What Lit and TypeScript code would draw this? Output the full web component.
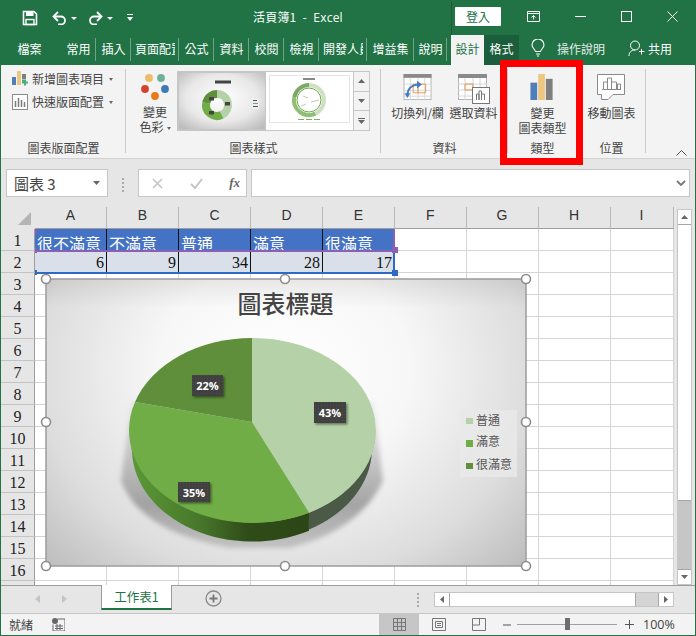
import { LitElement, html, css, svg } from 'lit';
import { customElement } from 'lit/decorators.js';

const RIBBON_TABS = [
  { label: '常用', w: 35 },
  { label: '插入', w: 35 },
  { label: '頁面配置', w: 48 },
  { label: '公式', w: 35 },
  { label: '資料', w: 35 },
  { label: '校閱', w: 35 },
  { label: '檢視', w: 35 },
  { label: '開發人員', w: 48 },
  { label: '增益集', w: 47 },
  { label: '說明', w: 33 },
];
const COLS = [
  { name: 'A', w: 72 },
  { name: 'B', w: 72 },
  { name: 'C', w: 72 },
  { name: 'D', w: 72 },
  { name: 'E', w: 72 },
  { name: 'F', w: 71.5 },
  { name: 'G', w: 72 },
  { name: 'H', w: 72 },
  { name: 'I', w: 63 },
];
const HEAD = ['很不滿意', '不滿意', '普通', '滿意', '很滿意'];
const VALUES = ['6', '9', '34', '28', '17'];
const ROW_NUMS = Array.from({ length: 16 }, (_, i) => i + 1);

@customElement('app-root')
export class AppRoot extends LitElement {
  static styles = css`
    :host { display: block; width: 696px; height: 636px; overflow: hidden; }
    .win {
      position: relative;
      width: 696px;
      height: 636px;
      box-sizing: border-box;
      border: solid #217346;
      border-width: 0 1px 1px 1px;
      background: #e6e6e6;
      display: flex;
      flex-direction: column;
      font-family: "Noto Sans CJK TC", "Open Sans", sans-serif;
      font-size: 12px;
      color: #444;
    }
    svg { display: block; flex: none; }

    /* title bar */
    .title {
      height: 35px;
      margin: 0 -1px;
      background: #217346;
      color: #fff;
      display: flex;
      align-items: flex-start;
      flex: none;
    }
    .qat { display: flex; align-items: center; height: 35px; padding-left: 22px; width: 231px; box-sizing: border-box; }
    .caret { width: 0; height: 0; border: 3px solid transparent; border-top: 3px solid #fff; border-bottom: 0; margin: 1px 0 0 0; }
    .doc { width: 220px; height: 34px; line-height: 34px; font-size: 12px; padding-left: 22px; box-sizing: border-box; letter-spacing: .2px; white-space: nowrap; }
    .doc span { font-family: "Open Sans", sans-serif; }
    .title-sep { width: 1px; height: 33px; margin-top: 2px; background: #1a5c38; }
    .login {
      width: 46px;
      height: 19px;
      margin: 7px 0 0 3px;
      background: #fff;
      color: #217346;
      text-align: center;
      line-height: 19px;
      border-radius: 1px;
      font-size: 12px;
    }
    .caption { display: flex; align-items: center; height: 33px; padding-left: 26px; gap: 35px; }

    /* tabs */
    .tabs {
      height: 30px;
      margin: 0 -1px;
      background: #217346;
      color: #fff;
      display: flex;
      flex: none;
      align-items: stretch;
      font-size: 12px;
    }
    .tab { display: flex; align-items: center; justify-content: center; overflow: hidden; white-space: nowrap; box-sizing: border-box; position: relative; padding-bottom: 4px; }
    .tab.sep::after { content: ''; position: absolute; right: 0; top: 3px; bottom: 4px; width: 1px; background: #6fa287; }
    .tab .clip { display: block; overflow: hidden; max-width: 40px; }
    .tab.file { width: 61px; padding-right: 2px; }
    .tab.active { width: 33px; margin-left: 4px; background: #f3f3f3; color: #217346; }
    .tab.fmt { width: 35px; background: #1c5e3b; }
    .help { display: flex; align-items: center; margin-left: 12px; gap: 12px; color: #e3ede8; width: 97px; padding-bottom: 4px; box-sizing: border-box; }
    .help b { font-weight: 400; display: block; width: 48px; overflow: hidden; white-space: nowrap; }
    .share { display: flex; align-items: center; gap: 3px; padding-bottom: 4px; }

    /* ribbon */
    .ribbon {
      height: 94px;
      flex: none;
      background: #f3f3f3;
      border-bottom: 1px solid #d2d2d2;
      box-sizing: border-box;
      display: flex;
      position: relative;
    }
    .group { position: relative; display: flex; flex-direction: column; align-items: stretch; box-sizing: border-box; }
    .group::after { content: ''; position: absolute; right: 0; top: 4px; bottom: 5px; width: 1px; background: #c9c9c9; }
    .g-body { flex: 1; display: flex; min-height: 0; }
    .g-label { height: 19px; line-height: 18px; text-align: center; font-size: 12px; color: #444; flex: none; }
    .stack { display: flex; flex-direction: column; padding: 4px 0 0 11px; gap: 4px; }
    .stack-row { display: flex; align-items: center; height: 19px; gap: 4px; white-space: nowrap; }
    .caret-d { width: 0; height: 0; border: 2.5px solid transparent; border-top: 3px solid #666; border-bottom: 0; margin: 1px 0 0 2px; }
    .big { display: flex; flex-direction: column; align-items: center; text-align: center; line-height: 15px; white-space: nowrap; box-sizing: border-box; }
    .big .ic { height: 40px; box-sizing: border-box; padding-top: 9px; display: flex; align-items: flex-start; justify-content: center; }
    .big.color { width: 51px; padding-left: 7px; }
    .swatches { margin: 8px 0 1px; }
    .gallery { display: flex; margin: 6px 0 0 0; height: 60px; border: 1px solid #c6c6c6; box-sizing: border-box; width: 193px; background: #fff; }
    .thumb { flex: none; }
    .thumb.sel { background: #c6c6c6; padding: 1px; }
    .thumb.plain { margin: 3px 0 0 3px; }
    .g-scroll { margin-left: auto; width: 15px; border-left: 1px solid #c6c6c6; display: flex; flex-direction: column; background: #f3f3f3; }
    .g-scroll div { flex: 1; display: flex; align-items: center; justify-content: center; border-bottom: 1px solid #c6c6c6; }
    .g-scroll div:last-child { border-bottom: 0; }
    .collapse { position: absolute; right: 8px; bottom: 2px; }

    /* formula bar */
    .fbar { height: 48px; flex: none; display: flex; align-items: flex-start; padding: 10px 5px 0 5px; box-sizing: border-box; }
    .fbox { height: 28px; box-sizing: border-box; border: 1px solid #c6c6c6; background: #fff; display: flex; align-items: center; }
    .name { width: 102px; padding: 0 7px; justify-content: space-between; font-size: 15px; color: #444; }
    .dots { width: 30px; display: flex; flex-direction: column; align-items: center; gap: 2px; padding-top: 9px; }
    .dots i { width: 2px; height: 2px; background: #a8a8a8; display: block; }
    .fx { width: 109px; padding: 0 6px 0 13px; justify-content: space-between; margin-right: 4px; }
    .fx em { font-family: "Liberation Serif", serif; font-size: 13px; font-weight: 700; color: #666; }
    .input { flex: 1; justify-content: flex-end; padding-right: 3px; }

    /* sheet */
    .sheet { flex: 1; min-height: 0; position: relative; display: flex; }
    .sheet-main { width: 673px; height: 378px; overflow: hidden; }
    .heads { display: flex; height: 22px; }
    .corner { width: 34px; flex: none; position: relative; }
    .tri { position: absolute; right: 4px; bottom: 4px; width: 0; height: 0; border-style: solid; border-width: 0 0 13px 13px; border-color: transparent transparent #b4b4b4 transparent; }
    .ch { box-sizing: border-box; flex: none; text-align: center; line-height: 17px; height: 22px; font-size: 14px; font-family: "Liberation Sans", sans-serif; color: #333; border-right: 1px solid #b8b8b8; border-bottom: 1px solid #9d9d9d; }
    .body { display: flex; position: relative; }
    .rows { width: 34px; flex: none; }
    .rh { box-sizing: border-box; height: 22px; line-height: 24px; text-align: center; font-size: 16px; font-family: "Liberation Serif", serif; color: #222; border-bottom: 1px solid #c4c4c4; border-right: 1px solid #9d9d9d; }
    .cells { background: #fff; flex: none; position: relative; border-right: 1px solid #9d9d9d; }
    .row { display: flex; height: 22px; }
    .c { box-sizing: border-box; flex: none; height: 22px; border-right: 1px solid #d4d4d4; border-bottom: 1px solid #d4d4d4; overflow: hidden; white-space: nowrap; font-size: 16px; color: #111; padding: 0 2px; }
    .c.h { background: #4472c4; color: #fff; border-right-color: #111; line-height: 28px; }
    .c.v { background: #dae0ea; border-right-color: #111; border-bottom-color: #fff; text-align: right; font-family: "Liberation Serif", serif; line-height: 24px; color: #111; }
    .vscroll { position: absolute; left: 676px; top: 2px; width: 15px; height: 376px; box-sizing: border-box; border: 1px solid #c6c6c6; background: #c6c6c6; display: flex; flex-direction: column; }
    .vs-btn { height: 14px; background: #fff; flex: none; display: flex; align-items: center; justify-content: center; border-bottom: 1px solid #a6a6a6; }
    .vs-thumb { height: 275px; background: #fff; flex: none; border-bottom: 1px solid #a6a6a6; }
    .vs-fill { flex: 1; }
    .vs-btn.end { border-top: 1px solid #a6a6a6; border-bottom: 0; }

    /* overlays on the grid */
    .range { position: absolute; left: 0; width: 360px; box-sizing: border-box; border: solid; border-width: 0 2px 2px 0; pointer-events: none; }
    .range.p { top: 0; height: 23px; border-color: #8a5fb5; }
    .range.b { top: 23px; height: 22px; border-color: #2e69c4; }
    .pin { position: absolute; width: 6px; height: 6px; }
    .pin.small { width: 2px; height: 5px; }
    .pin.purple { background: #8a5fb5; }
    .pin.blue { background: #2e69c4; }
    .chart { position: absolute; left: 44px; top: 278px; }

    /* sheet tabs */
    .stabs { height: 28px; flex: none; border-top: 1px solid #9d9d9d; box-sizing: border-box; display: flex; align-items: flex-start; position: relative; background: #e6e6e6; }
    .nav { width: 100px; height: 26px; display: flex; align-items: center; justify-content: center; gap: 22px; }
    .stab { width: 71px; height: 25px; margin-top: -1px; box-sizing: border-box; background: #fff; border: 1px solid #9d9d9d; border-top: 0; border-bottom: 2px solid #217346; color: #217346; text-align: center; line-height: 24px; font-size: 12.5px; }
    .plus { margin: 4px 0 0 33px; }
    .hs-dots { margin-left: 195px; width: 2px; padding-top: 7px; display: flex; flex-direction: column; gap: 2px; }
    .hs-dots i { width: 2px; height: 2px; background: #a8a8a8; display: block; }
    .hs { margin: 6px 0 0 15px; width: 240px; height: 15px; display: flex; border: 1px solid #c6c6c6; box-sizing: border-box; background: #d4d4d4; }
    .hs-btn { width: 14px; background: #fff; flex: none; display: flex; align-items: center; justify-content: center; border-right: 1px solid #a6a6a6; }
    .hs-btn.end { border-right: 0; border-left: 1px solid #a6a6a6; margin-left: auto; }
    .hs-thumb { width: 185px; background: #fff; border-right: 1px solid #a6a6a6; }

    /* status bar */
    .status { height: 22px; flex: none; background: #f3f3f3; border-top: 1px solid #c6c6c6; box-sizing: border-box; display: flex; align-items: center; padding-left: 8px; color: #444; }
    .status .ready { width: 43px; }
    .status .spacer { width: 314px; }
    .vbtn { width: 40px; height: 21px; display: flex; align-items: center; justify-content: center; }
    .vbtn.on { background: #c6c6c6; }
    .zoom { display: flex; align-items: center; margin-left: 4px; }
    .track { position: relative; width: 100px; height: 1px; background: #a0a0a0; margin: 0 8px 0 6px; }
    .knob { position: absolute; left: 48px; top: -6px; width: 5px; height: 12px; background: #6d6d6d; }
    .pct { margin-left: 9px; font-family: "Open Sans", sans-serif; font-size: 12.5px; color: #444; }

    .red { position: absolute; left: 499px; top: 60px; width: 83px; height: 105px; box-sizing: border-box; border: 7px solid #ff0000; pointer-events: none; }
  `;

  private saveIcon() {
    return html`<svg width="16" height="16" viewBox="0 0 16 16"><path d="M1.500 1.500h10.500L14.500 4V14.500H1.500z" fill="none" stroke="#fff" stroke-width="1.600"/><rect x="4" y="1.500" width="7.500" height="4.500" fill="#fff"/><rect x="4" y="9.500" width="8" height="5" fill="none" stroke="#fff" stroke-width="1.400"/></svg>`;
  }
  private undoIcon(flip = false) {
    return html`<svg width="15" height="14" viewBox="0 0 15 14" style=${flip ? 'transform:scaleX(-1)' : ''}><path d="M2.500 5.500h6.500a4 4 0 0 1 0 8H6" fill="none" stroke="#fff" stroke-width="1.800"/><path d="M6 1 1.500 5.500 6 10" fill="none" stroke="#fff" stroke-width="1.800"/></svg>`;
  }
  private donut(cx: number, cy: number, r: number, sw: number, cols: string[]) {
    const seg = (a: number, b: number, c: string) => {
      const p = (t: number) => [cx + r * Math.sin(t * 2 * Math.PI), cy - r * Math.cos(t * 2 * Math.PI)];
      const [x1, y1] = p(a);
      const [x2, y2] = p(b);
      return svg`<path d="M${x1} ${y1}A${r} ${r} 0 ${b - a > 0.5 ? 1 : 0} 1 ${x2} ${y2}" fill="none" stroke=${c} stroke-width=${sw}/>`;
    };
    return svg`${seg(0, 0.43, cols[0])}${seg(0.43, 0.78, cols[1])}${seg(0.78, 1, cols[2])}`;
  }

  private thumb1() {
    return html`<div class="thumb sel"><svg width="86" height="56" viewBox="0 0 86 56">
      <defs><radialGradient id="t1" cx=".5" cy=".45" r=".7"><stop offset="0" stop-color="#fff"/><stop offset=".6" stop-color="#e8e8e8"/><stop offset="1" stop-color="#bcbcbc"/></radialGradient></defs>
      <rect width="86" height="56" fill="url(#t1)"/>
      <rect x="36" y="7.500" width="16" height="3" fill="#444"/>
      ${this.donut(38, 32, 11, 8, ['#b5d1a7', '#70ad47', '#5f8f3a'])}
      <rect x="46" y="29" width="5" height="3.500" fill="#444"/><rect x="30" y="24" width="5" height="3.500" fill="#444"/><rect x="30" y="38" width="5" height="3.500" fill="#444"/>
      <rect x="73" y="25" width="7" height="11" fill="#eee"/><rect x="74" y="27" width="4" height="1" fill="#555"/><rect x="74" y="30" width="5" height="1" fill="#6a8"/><rect x="74" y="33" width="5" height="1" fill="#555"/>
    </svg></div>`;
  }
  private thumb2() {
    return html`<div class="thumb plain"><svg width="81" height="48" viewBox="0 0 81 48">
      <rect x=".5" y=".5" width="80" height="47" fill="#fff" stroke="#e4e4e4"/>
      <rect x="34" y="3" width="12" height="2" fill="#888"/>
      ${this.donut(40, 25, 15, 4, ['#cfe0c6', '#8fbe74', '#7da868'])}
      <circle cx="40" cy="25" r="12" fill="none" stroke="#6da94a" stroke-width="1"/>
      <path d="M34 21l5 2M42 27l8-2M32 31l5-2" stroke="#aaa" stroke-width=".7"/>
      <rect x="29" y="44" width="6" height="1" fill="#7ab45a"/><rect x="37" y="44" width="6" height="1" fill="#7ab45a"/><rect x="45" y="44" width="6" height="1" fill="#7ab45a"/>
    </svg></div>`;
  }

  private chart() {
    // coordinates in this drawing are the page's own pixels
    const cx = 252.5, cy = 430.5, rx = 123.5, ry = 92.5, ax = 252, ay = 422;
    const depth = 18;
    const handles = [[46, 279], [285, 279], [526, 279], [46, 422], [526, 422], [46, 566], [285, 566], [526, 566]];
    const labels = [
      { x: 314, y: 402, w: 32, h: 21, t: '43%' },
      { x: 192, y: 375, w: 31, h: 21, t: '22%' },
      { x: 178, y: 482, w: 32, h: 20, t: '35%' },
    ];
    return html`<svg class="chart" width="482" height="289" viewBox="45 278 482 289" style="overflow:visible">
      <defs>
        <radialGradient id="bg" gradientUnits="userSpaceOnUse" cx="285" cy="370" r="350" gradientTransform="translate(285 370) scale(1 .85) translate(-285 -370)">
          <stop offset="0" stop-color="#ffffff"/><stop offset=".36" stop-color="#f7f7f7"/><stop offset=".7" stop-color="#dddddd"/><stop offset="1" stop-color="#b6b6b6"/>
        </radialGradient>
        <linearGradient id="edgeT" x1="0" x2="0" y1="0" y2="1"><stop offset="0" stop-color="#000" stop-opacity=".07"/><stop offset=".1" stop-color="#000" stop-opacity="0"/></linearGradient>
        <linearGradient id="shadow" x1="0" x2="0" y1="0" y2="1"><stop offset="0" stop-color="#9a9a9a" stop-opacity=".1"/><stop offset=".7" stop-color="#8c8c8c" stop-opacity=".75"/><stop offset="1" stop-color="#8c8c8c" stop-opacity=".4"/></linearGradient>
        <linearGradient id="wall" gradientUnits="userSpaceOnUse" x1="129" x2="310" y1="0" y2="0"><stop offset="0" stop-color="#5c9a38"/><stop offset=".4" stop-color="#47762a"/><stop offset=".65" stop-color="#2f4d18"/><stop offset="1" stop-color="#2c4615"/></linearGradient>
        <filter id="soft" x="-20%" y="-20%" width="140%" height="140%"><feGaussianBlur stdDeviation="2.500"/></filter>
        <filter id="ds" x="-30%" y="-30%" width="170%" height="170%"><feDropShadow dx="1.500" dy="1.500" stdDeviation="1.200" flood-color="#000" flood-opacity=".45"/></filter>
        <pattern id="dots" width="3" height="3" patternUnits="userSpaceOnUse"><rect width="3" height="3" fill="#3f3f3f"/><rect width="1" height="1" fill="#4d4d4d"/></pattern>
      </defs>
      <rect x="46" y="279" width="480" height="287" fill="url(#bg)"/>
      <rect x="46" y="279" width="480" height="287" fill="url(#edgeT)"/>
      <rect x="46" y="279" width="480" height="287" fill="none" stroke="#9c9c9c" stroke-width="1.500"/>

      <path d="M131 402 L121 481 Q140 532 230 548 L290 548 Q360 530 383 481 L374 402 Z" fill="url(#shadow)" filter="url(#soft)"/>

      <path d="M${cx - rx + 2} ${cy + 8} A${rx} ${ry} 0 0 0 309 512.7 V${512.7 + depth} A${rx - 3} ${ry} 0 0 1 ${cx - rx + 3} ${cy + 22} Z" fill="url(#wall)"/>
      <path d="M309 512.700 A${rx} ${ry} 0 0 0 ${cx + rx - 1} ${cy + 8} L${cx + rx - 4} ${cy + 20} A${rx - 3} ${ry} 0 0 1 308.500 ${512.7 + depth - 1} Z" fill="#4b5a46"/>

      <path d="M${ax} ${ay} L${ax} 338 A${rx} ${ry} 0 0 1 309 512.700 Z" fill="#b5d1a7"/>
      <path d="M${ax} ${ay} L309 512.700 A${rx} ${ry} 0 0 1 135 402 Z" fill="#70ad47"/>
      <path d="M${ax} ${ay} L135 402 A${rx} ${ry} 0 0 1 ${ax} 338 Z" fill="#5f8f3a"/>

      <text x="285.500" y="313" text-anchor="middle" font-size="24" font-weight="500" fill="#444">圖表標題</text>

      ${labels.map(l => svg`
        <g filter="url(#ds)"><rect x=${l.x} y=${l.y} width=${l.w} height=${l.h} fill="url(#dots)"/></g>
        <text x=${l.x + l.w / 2} y=${l.y + 14.5} text-anchor="middle" font-family="'Open Sans',sans-serif" font-size="11" font-weight="700" fill="#fff">${l.t}</text>
      `)}

      <rect x="460" y="410" width="57" height="67" fill="#e9e9e9" fill-opacity=".85"/>
      <rect x="466" y="418" width="7" height="6" fill="#b5d1a7"/><text x="476" y="425" font-size="12" fill="#555">普通</text>
      <rect x="466" y="440" width="7" height="7" fill="#70ad47"/><text x="476" y="446" font-size="12" fill="#555">滿意</text>
      <rect x="466" y="463" width="7" height="6" fill="#5f8f3a"/><text x="476" y="469" font-size="12" fill="#555">很滿意</text>

      ${handles.map(([x, y]) => svg`<circle cx=${x} cy=${y} r="4.500" fill="#fff" stroke="#8c8c8c" stroke-width="1.600"/>`)}
    </svg>`;
  }

  private renderTitle() {
    return html`<div class="title">
      <div class="qat">
        ${this.saveIcon()}
        <span style="width:14px"></span>${this.undoIcon()}
        <span style="width:4px"></span><span class="caret"></span>
        <span style="width:11px"></span>${this.undoIcon(true)}
        <span style="width:4px"></span><span class="caret"></span>
        <span style="width:14px"></span>
        <svg width="6" height="7" viewBox="0 0 6 7"><path d="M0 0h6v1H0zM0 3h6L3 7z" fill="#fff"/></svg>
      </div>
      <div class="doc">活頁簿1 <span>&nbsp;-&nbsp; Excel</span></div>
      <div class="title-sep"></div>
      <div class="login">登入</div>
      <div class="caption">
        <svg width="13" height="11" viewBox="0 0 13 11"><path d="M.5.5h12v10H.5zM.5 2.500h12M6.500 8.500V4.500M4.500 6.500l2-2 2 2" fill="none" stroke="#fff"/></svg>
        <svg width="11" height="11" viewBox="0 0 11 11"><path d="M0 5.500h11" stroke="#fff"/></svg>
        <svg width="11" height="11" viewBox="0 0 11 11"><rect x=".5" y=".5" width="10" height="10" fill="none" stroke="#fff"/></svg>
        <svg width="11" height="11" viewBox="0 0 11 11"><path d="M.5.5l10 10M10.500.5l-10 10" stroke="#fff"/></svg>
      </div>
    </div>`;
  }

  private renderTabs() {
    return html`<div class="tabs">
      <div class="tab file">檔案</div>
      ${RIBBON_TABS.map(
        t => html`<div class="tab sep" style="width:${t.w}px"><span class="clip">${t.label}</span></div>`
      )}
      <div class="tab active">設計</div>
      <div class="tab fmt">格式</div>
      <div class="help">
        <svg width="14" height="18" viewBox="0 0 14 18"><path d="M4.500 12.500C4 10 1 9 1 6a6 6 0 0 1 12 0c0 3-3 4-3.500 6.500zM5 15h4M6 17h2" fill="none" stroke="#fff" stroke-width="1.100"/></svg>
        <b>操作說明</b>
      </div>
      <div class="share">
        <svg width="17" height="17" viewBox="0 0 17 17"><circle cx="7" cy="5.500" r="4.500" fill="none" stroke="#fff"/><path d="M1 16c0-4 2.500-6 6-6M11 11.500h5.500M13.500 9v5.500" fill="none" stroke="#fff"/></svg>
        <span>共用</span>
      </div>
    </div>`;
  }

  private renderRibbon() {
    return html`<div class="ribbon">
      <div class="group" style="width:125px">
        <div class="g-body">
          <div class="stack">
            <div class="stack-row">
              <svg width="16" height="15" viewBox="0 0 16 15"><rect x="0" y="6" width="4" height="8" fill="#4e7fb8"/><rect x="5" y="0" width="4" height="14" fill="#edc77f"/><rect x="10" y="3" width="4" height="5" fill="#7f7f7f"/><path d="M10.500 9h4v2h2v2h-2v2h-2v-2h-2z" fill="#4caf7d" transform="translate(-.5 -.5)"/></svg>
              <span>新增圖表項目</span><span class="caret-d" style="margin-left:1px"></span>
            </div>
            <div class="stack-row">
              <svg width="16" height="16" viewBox="0 0 16 16"><rect x=".5" y=".5" width="15" height="15" fill="#fff" stroke="#8a8a8a"/><path d="M3.500 13V7M6.500 13V4M9.500 13V6M12.500 13V8" stroke="#7a7a7a" stroke-width="1.500"/></svg>
              <span>快速版面配置</span><span class="caret-d" style="margin-left:1px"></span>
            </div>
          </div>
        </div>
        <div class="g-label">圖表版面配置</div>
      </div>
      <div class="group" style="width:255px">
        <div class="g-body">
          <div class="big color">
            <svg class="swatches" width="30" height="30" viewBox="0 0 30 30">
              <circle cx="9" cy="5" r="3.900" fill="#edbc68"/><circle cx="21" cy="5" r="3.900" fill="#6eb19a"/>
              <circle cx="5" cy="16" r="3.900" fill="#d5432f"/><circle cx="25" cy="16" r="3.900" fill="#3f78b8"/>
              <circle cx="15" cy="23" r="3.900" fill="#e97a18"/>
            </svg>
            <span>變更</span><span>色彩<span class="caret-d" style="display:inline-block;margin:0 0 2px 3px"></span></span>
          </div>
          <div class="gallery">
            ${this.thumb1()}${this.thumb2()}
            <div class="g-scroll">
              <div><svg width="7" height="4" viewBox="0 0 7 4"><path d="M3.500 0 7 4H0z" fill="#666"/></svg></div>
              <div><svg width="7" height="4" viewBox="0 0 7 4"><path d="M0 0h7L3.500 4z" fill="#666"/></svg></div>
              <div><svg width="7" height="6" viewBox="0 0 7 6"><path d="M0 0h7v1H0zM0 2h7L3.500 6z" fill="#666"/></svg></div>
            </div>
          </div>
        </div>
        <div class="g-label">圖表樣式</div>
      </div>
      <div class="group" style="width:127px">
        <div class="g-body" style="padding-left:10px">
          <div class="big" style="width:53px">
            <div class="ic">
              <svg width="30" height="27" viewBox="0 0 30 28">
                <rect x=".5" y=".5" width="28" height="26" fill="#fff" stroke="#b5b5b5"/><rect x="0" y="0" width="29" height="4" fill="#8a8a8a"/>
                <path d="M0 10.500h29M0 17h29M0 23h29M7 4v23M15 4v23M22 4v23" stroke="#d6d6d6"/>
                <path d="M10 10.500h13v9H10zM15 10.500v9" fill="none" stroke="#e8934a"/>
                <path d="M4 22c0-7 5-11 11-11" fill="none" stroke="#3f7cc0" stroke-width="2"/><path d="M14 7l5 4-5 4z" fill="#3f7cc0"/><path d="M1 20l3 5 3-5z" fill="#3f7cc0"/>
              </svg>
            </div>
            <span>切換列/欄</span>
          </div>
          <div class="big" style="width:55px;margin-left:2px">
            <div class="ic">
              <svg width="32" height="30" viewBox="0 0 32 30">
                <rect x=".5" y=".5" width="28" height="25" fill="#fff" stroke="#b5b5b5"/><rect x="0" y="0" width="29" height="4" fill="#8a8a8a"/>
                <path d="M0 10h29M0 16h29M0 22h29M7 4v22M15 4v22M22 4v22" stroke="#d6d6d6"/>
                <path d="M7 10h8v6H7z" fill="none" stroke="#e8934a"/>
                <rect x="14.500" y="13.500" width="17" height="16" fill="#fff" stroke="#777"/><path d="M18.500 26v-6h2.500v6M21 26v-9h2.500v9M23.500 26v-6h3v6" fill="none" stroke="#777"/>
              </svg>
            </div>
            <span>選取資料</span>
          </div>
        </div>
        <div class="g-label">資料</div>
      </div>
      <div class="group" style="width:69px">
        <div class="g-body" style="justify-content:center">
          <div class="big">
            <div class="ic">
              <svg width="24" height="26" viewBox="0 0 24 27"><rect x="0" y="9" width="7" height="18" fill="#4e7fb8"/><rect x="8" y="0" width="7" height="27" fill="#edc77f"/><rect x="16" y="5" width="7" height="22" fill="#7f7f7f"/></svg>
            </div>
            <span>變更</span><span>圖表類型</span>
          </div>
        </div>
        <div class="g-label">類型</div>
      </div>
      <div class="group" style="width:69px">
        <div class="g-body" style="justify-content:center">
          <div class="big">
            <div class="ic">
              <svg width="28" height="26" viewBox="0 0 28 26"><path d="M.5.5h27v20H16l-5 5H4.500v-5H.5z" fill="#fff" stroke="#8a8a8a"/><path d="M6.500 15V8h4v7M10.500 15V4h4v11M14.500 15V8h5v7M20.500 15v-5h3v5" fill="#fff" stroke="#8a8a8a"/><path d="M5 15.500h19" stroke="#8a8a8a"/></svg>
            </div>
            <span>移動圖表</span>
          </div>
        </div>
        <div class="g-label">位置</div>
      </div>
      <svg class="collapse" width="11" height="6" viewBox="0 0 11 6"><path d="M.5 5.500l5-5 5 5" fill="none" stroke="#555"/></svg>
    </div>`;
  }

  private renderFormula() {
    return html`<div class="fbar">
      <div class="fbox name"><span>圖表 3</span>
        <svg width="7" height="4" viewBox="0 0 7 4"><path d="M0 0h7L3.500 4z" fill="#666"/></svg></div>
      <div class="dots"><i></i><i></i><i></i><i></i></div>
      <div class="fbox fx">
        <svg width="11" height="11" viewBox="0 0 11 11"><path d="M1 1l9 9M10 1l-9 9" stroke="#c4c4c4" stroke-width="1.600"/></svg>
        <svg width="13" height="11" viewBox="0 0 13 11"><path d="M1 6l4 4 7-9" fill="none" stroke="#c4c4c4" stroke-width="2"/></svg>
        <em>fx</em>
      </div>
      <div class="fbox input">
        <svg width="10" height="6" viewBox="0 0 10 6"><path d="M1 1l4 4 4-4" fill="none" stroke="#777" stroke-width="1.800"/></svg>
      </div>
    </div>`;
  }

  private renderSheet() {
    const total = COLS.reduce((s, c) => s + c.w, 0);
    return html`<div class="sheet">
      <div class="sheet-main">
        <div class="heads">
          <div class="corner"><div class="tri"></div></div>
          ${COLS.map(c => html`<div class="ch" style="width:${c.w}px">${c.name}</div>`)}
        </div>
        <div class="body">
          <div class="rows">${ROW_NUMS.map(n => html`<div class="rh">${n}</div>`)}<div class="rh"></div></div>
          <div class="cells" style="width:${total}px">
            <div class="row">${COLS.map((c, i) => html`<div class="c ${i < 5 ? 'h' : ''}" style="width:${c.w}px">${HEAD[i] ?? ''}</div>`)}</div>
            <div class="row">${COLS.map((c, i) => html`<div class="c ${i < 5 ? 'v' : ''}" style="width:${c.w}px">${VALUES[i] ?? ''}</div>`)}</div>
            ${ROW_NUMS.slice(1).map(() => html`<div class="row">${COLS.map(c => html`<div class="c" style="width:${c.w}px"></div>`)}</div>`)}
            <div class="range p"></div>
            <div class="range b"></div>
            <div class="pin purple" style="left:357px;top:18px"></div>
            <div class="pin blue" style="left:357px;top:41px"></div>
            <div class="pin small purple" style="left:0;top:0"></div>
            <div class="pin small purple" style="left:0;top:19px"></div>
            <div class="pin small blue" style="left:0;top:41px"></div>
            <div class="pin small purple" style="left:358px;top:0"></div>
          </div>
        </div>
      </div>
      <div class="vscroll">
        <div class="vs-btn"><svg width="7" height="4" viewBox="0 0 7 4"><path d="M3.500 0 7 4H0z" fill="#666"/></svg></div>
        <div class="vs-thumb"></div>
        <div class="vs-fill"></div>
        <div class="vs-btn end"><svg width="7" height="4" viewBox="0 0 7 4"><path d="M0 0h7L3.500 4z" fill="#666"/></svg></div>
      </div>
    </div>`;
  }

  private renderSheetTabs() {
    return html`<div class="stabs">
      <div class="nav">
        <svg width="5" height="8" viewBox="0 0 5 8"><path d="M5 0v8L0 4z" fill="#c4c4c4"/></svg>
        <svg width="5" height="8" viewBox="0 0 5 8"><path d="M0 0v8l5-4z" fill="#c4c4c4"/></svg>
      </div>
      <div class="stab">工作表1</div>
      <svg class="plus" width="17" height="17" viewBox="0 0 17 17"><circle cx="8.500" cy="8.500" r="7.500" fill="none" stroke="#8a8a8a" stroke-width="1.300"/><path d="M4.500 8.500h8M8.500 4.500v8" stroke="#777" stroke-width="1.800"/></svg>
      <div class="hs-dots"><i></i><i></i><i></i><i></i></div>
      <div class="hs">
        <div class="hs-btn"><svg width="4" height="7" viewBox="0 0 4 7"><path d="M4 0v7L0 3.500z" fill="#666"/></svg></div>
        <div class="hs-thumb"></div>
        <div class="hs-btn end"><svg width="4" height="7" viewBox="0 0 4 7"><path d="M0 0v7l4-3.500z" fill="#666"/></svg></div>
      </div>
    </div>`;
  }

  private renderStatus() {
    return html`<div class="status">
      <span class="ready">就緒</span>
      <svg width="13" height="13" viewBox="0 0 13 13"><circle cx="3" cy="3" r="3" fill="#666"/><path d="M5.500 1H13v12H1V6.500" fill="none" stroke="#666"/><path d="M3 8h8M3 10.500h8M5 6v6M8 6v6" stroke="#666"/></svg>
      <span class="spacer"></span>
      <div class="vbtn on"><svg width="13" height="13" viewBox="0 0 13 13"><path d="M.5.500h12v12H.5zM4.500.5v12M8.500.5v12M.5 4.500h12M.5 8.500h12" fill="none" stroke="#777"/></svg></div>
      <div class="vbtn"><svg width="14" height="13" viewBox="0 0 14 13"><path d="M.5.5h13v12H.5z" fill="none" stroke="#777"/><path d="M3.500 3.500h7v6h-7zM5 5.500h4M5 7.500h4" fill="none" stroke="#777"/></svg></div>
      <div class="vbtn"><svg width="14" height="13" viewBox="0 0 14 13"><path d="M.5.5h13v12H.5zM.5 7h7V.5" fill="none" stroke="#777"/></svg></div>
      <div class="zoom">
        <svg width="8" height="2" viewBox="0 0 8 2"><path d="M0 1h8" stroke="#555"/></svg>
        <div class="track"><div class="knob"></div></div>
        <svg width="9" height="9" viewBox="0 0 9 9"><path d="M0 4.500h9M4.500 0v9" stroke="#555"/></svg>
        <span class="pct">100%</span>
      </div>
    </div>`;
  }

  render() {
    return html`<div class="win">
      ${this.renderTitle()}
      ${this.renderTabs()}
      ${this.renderRibbon()}
      ${this.renderFormula()}
      ${this.renderSheet()}
      ${this.renderSheetTabs()}
      ${this.renderStatus()}
      ${this.chart()}
      <div class="red"></div>
    </div>`;
  }
}
